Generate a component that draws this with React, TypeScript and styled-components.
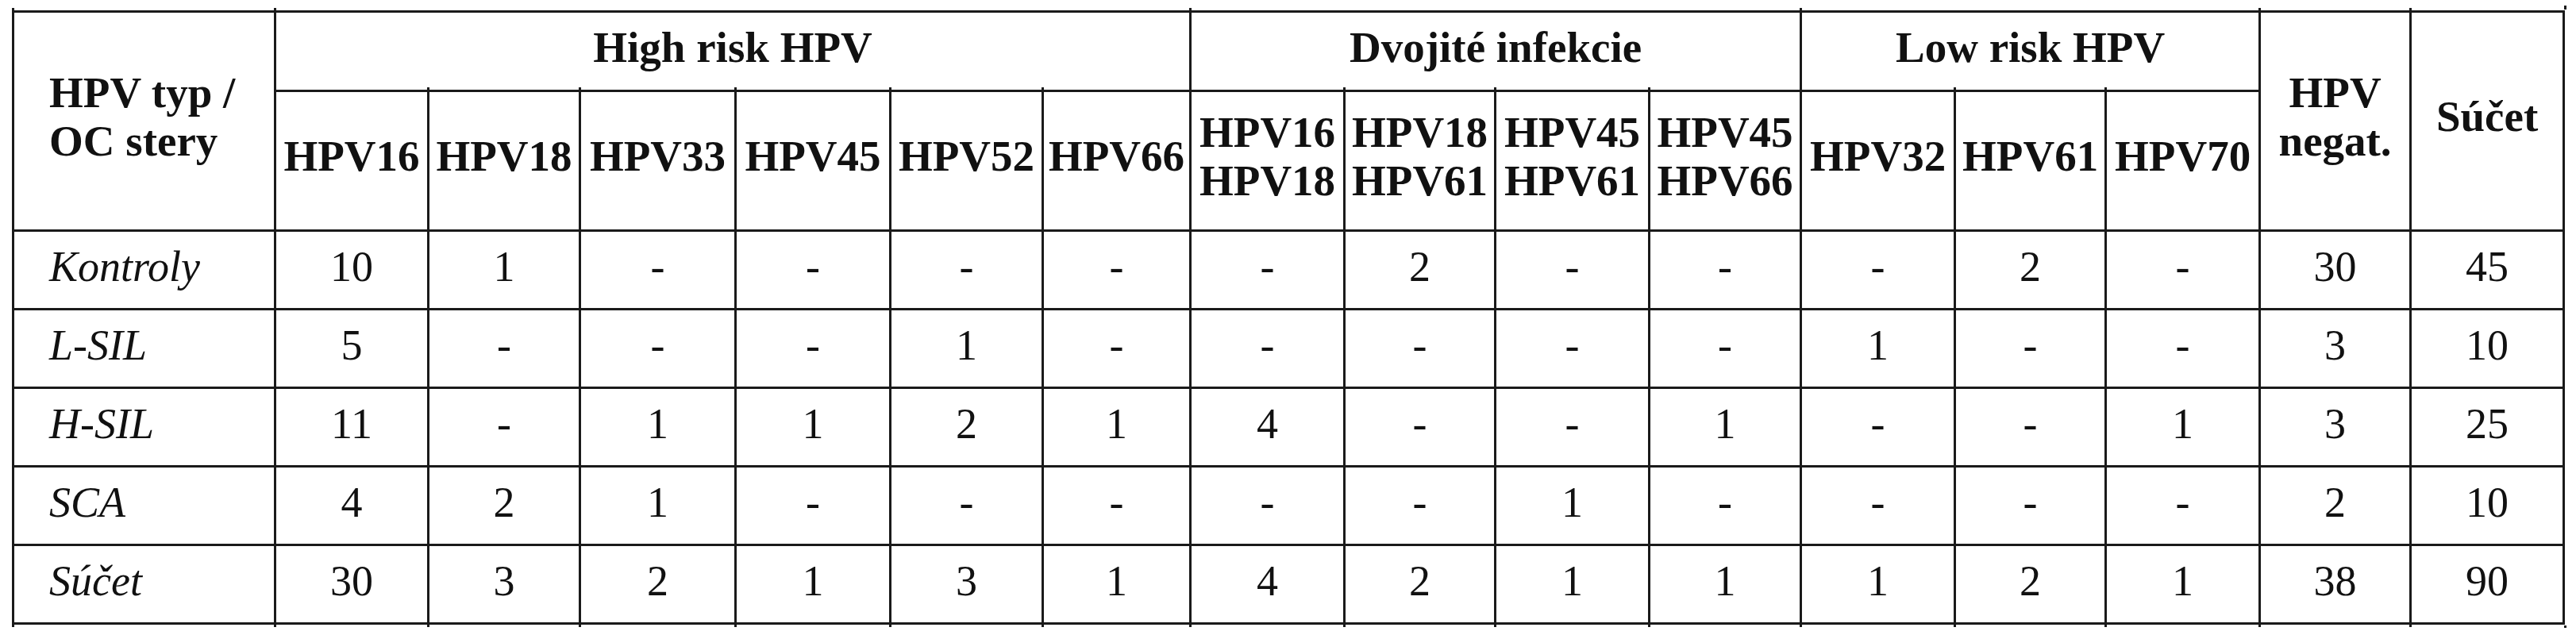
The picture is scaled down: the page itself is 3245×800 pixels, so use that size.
import React from 'react'
import styled, { createGlobalStyle } from 'styled-components'

const GlobalStyle = createGlobalStyle`
  html, body {
    margin: 0;
    padding: 0;
    background: #fff;
  }
  body {
    font-family: "Liberation Serif", "Times New Roman", serif;
    color: #111;
  }
`

const LINE = '#1a1a1a'

const Page = styled.div`
  padding: 13px 0 0 15px;
`

// wrapper only carries the two little overshoot ticks of the right edge
const TableWrap = styled.div`
  position: relative;
  display: inline-block;

  &::before,
  &::after {
    content: '';
    position: absolute;
    right: -2px;
    width: 3px;
    height: 5px;
    background: ${LINE};
  }
  &::before {
    top: -6px;
  }
  &::after {
    bottom: -6px;
  }
`

const Table = styled.table`
  border-collapse: collapse;
  table-layout: fixed;
  width: 3213px;
  font-family: "Liberation Serif", "Times New Roman", serif;
`

const HeadRow = styled.tr<{ $height: number }>`
  height: ${p => p.$height}px;
`

const BodyRow = styled.tr`
  height: 99px;
`

const Cell = styled.td<{ $bottom?: boolean }>`
  position: relative;
  padding: 0;
  border: 3px solid ${LINE};
  text-align: center;
  vertical-align: middle;

  &::before {
    content: '';
    position: absolute;
    left: -3px;
    top: -6px;
    width: 3px;
    height: 5px;
    background: ${LINE};
  }

  ${p => p.$bottom && `
    &::after {
      content: '';
      position: absolute;
      left: -3px;
      bottom: -6px;
      width: 3px;
      height: 5px;
      background: ${LINE};
    }
  `}
`

const HeadCell = styled(Cell).attrs({ as: 'th' })<{ $left?: boolean }>`
  font-weight: bold;
  font-size: 55px;
  line-height: 61px;
  text-align: ${p => (p.$left ? 'left' : 'center')};
  padding-left: ${p => (p.$left ? '44px' : '0')};
  padding-bottom: 12px;
  white-space: nowrap;
`

const GroupCell = styled(HeadCell)`
  padding-bottom: 10px;
`

const LabelCell = styled(Cell)`
  font-size: 54px;
  font-style: italic;
  text-align: left;
  padding-left: 44px;
  padding-bottom: 8px;
`

const ValueCell = styled(Cell)`
  font-size: 54px;
  padding-bottom: 8px;
`

const widths = [330, 193, 191, 196, 195, 192, 186, 194, 190, 194, 191, 194, 190, 194, 190, 193]

const types: string[][] = [
  ['HPV16'], ['HPV18'], ['HPV33'], ['HPV45'], ['HPV52'], ['HPV66'],
  ['HPV16', 'HPV18'], ['HPV18', 'HPV61'], ['HPV45', 'HPV61'], ['HPV45', 'HPV66'],
  ['HPV32'], ['HPV61'], ['HPV70'],
]

type Row = {
  label: string
  values: string[]
}

const rows: Row[] = [
  { label: 'Kontroly', values: ['10', '1', '-', '-', '-', '-', '-', '2', '-', '-', '-', '2', '-', '30', '45'] },
  { label: 'L-SIL', values: ['5', '-', '-', '-', '1', '-', '-', '-', '-', '-', '1', '-', '-', '3', '10'] },
  { label: 'H-SIL', values: ['11', '-', '1', '1', '2', '1', '4', '-', '-', '1', '-', '-', '1', '3', '25'] },
  { label: 'SCA', values: ['4', '2', '1', '-', '-', '-', '-', '-', '1', '-', '-', '-', '-', '2', '10'] },
  { label: 'Súčet', values: ['30', '3', '2', '1', '3', '1', '4', '2', '1', '1', '1', '2', '1', '38', '90'] },
]

const Lines: React.FC<{ lines: string[] }> = ({ lines }) => (
  <>
    {lines.map((line, i) => (
      <React.Fragment key={line + i}>
        {i > 0 && <br />}
        {line}
      </React.Fragment>
    ))}
  </>
)

const App: React.FC = () => {
  return (
    <Page>
      <GlobalStyle />
      <TableWrap>
        <Table>
          <colgroup>
            {widths.map((w, i) => (
              <col key={i} style={{ width: w }} />
            ))}
          </colgroup>
          <thead>
            <HeadRow $height={100}>
              <HeadCell rowSpan={2} $left>
                HPV typ /<br />OC stery
              </HeadCell>
              <GroupCell colSpan={6}>High risk HPV</GroupCell>
              <GroupCell colSpan={4}>Dvojité infekcie</GroupCell>
              <GroupCell colSpan={3}>Low risk HPV</GroupCell>
              <HeadCell rowSpan={2}>
                HPV<br />negat.
              </HeadCell>
              <HeadCell rowSpan={2}>Súčet</HeadCell>
            </HeadRow>
            <HeadRow $height={176}>
              {types.map((t, i) => (
                <HeadCell key={i}>
                  <Lines lines={t} />
                </HeadCell>
              ))}
            </HeadRow>
          </thead>
          <tbody>
            {rows.map((row, r) => {
              const last = r === rows.length - 1
              return (
                <BodyRow key={row.label}>
                  <LabelCell $bottom={last}>{row.label}</LabelCell>
                  {row.values.map((v, i) => (
                    <ValueCell key={i} $bottom={last}>{v}</ValueCell>
                  ))}
                </BodyRow>
              )
            })}
          </tbody>
        </Table>
      </TableWrap>
    </Page>
  )
}

export default App
